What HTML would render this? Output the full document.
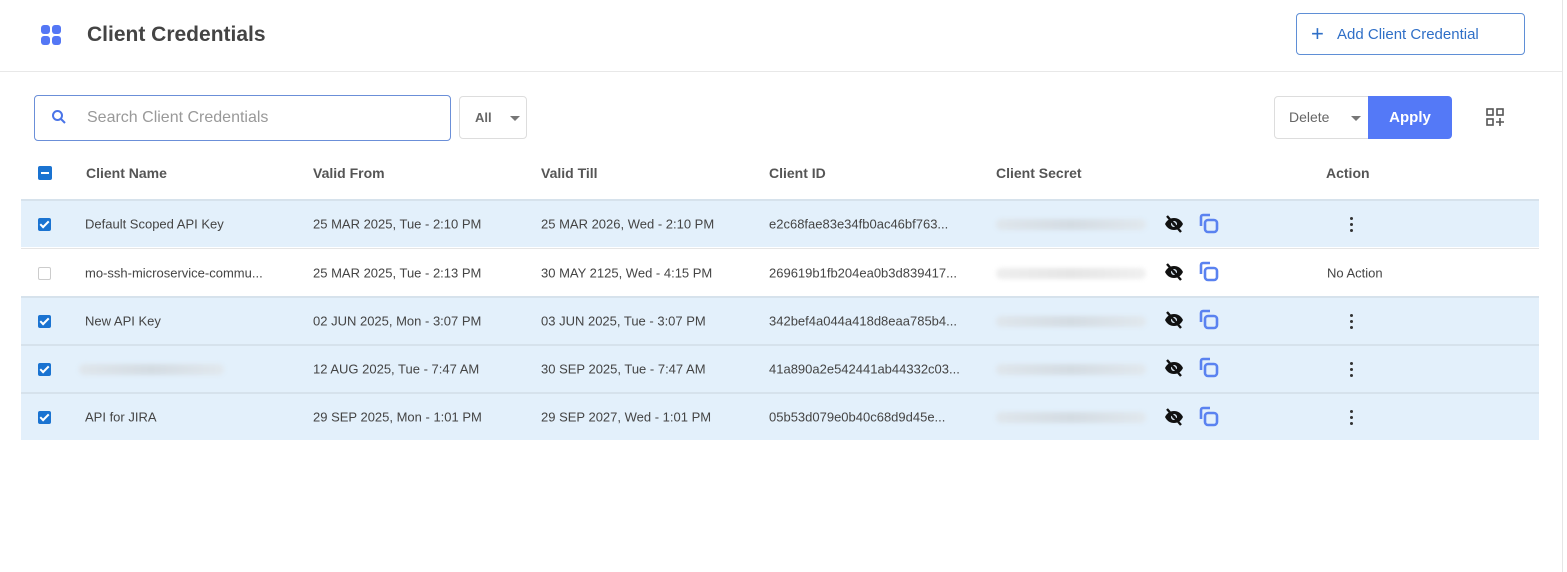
<!DOCTYPE html>
<html><head><meta charset="utf-8"><style>
*{box-sizing:border-box;margin:0;padding:0}
body{width:1567px;height:572px;background:#fff;font-family:"Liberation Sans",sans-serif;position:relative;overflow:hidden;color:#333}
.abs{position:absolute}
.hdrline{position:absolute;left:0;top:71px;width:1562px;height:1px;background:#e8e8e8}
.vline{position:absolute;left:1562px;top:0;width:1px;height:572px;background:#e6e6e6}
.row{position:absolute;left:21px;width:1518px;height:48px;font-size:13px;color:#444}
.row.sel{background:#e3f0fb;border-top:2px solid #d6e2ec}
.row.un{background:#fff;border-top:1px solid #e5e5e5}
.row span{position:absolute;top:50%;transform:translateY(-50%);white-space:nowrap}
.cb{position:absolute;left:17px;top:50%;margin-top:-6px;width:13px;height:13px;border-radius:2px;background:#1a73d1}
.cb.off{background:#fff;border:1px solid #ccc}
.blur{position:absolute;left:975px;top:50%;margin-top:-5px;width:150px;height:11px;border-radius:6px;background:linear-gradient(90deg,#dfe6ec,#d4dce3,#e1e8ee);filter:blur(2px)}
.th{position:absolute;top:165px;font-size:14px;font-weight:bold;color:#555}
.dots{position:absolute;left:1329px;top:50%;margin-top:-7px;width:3px;height:15px}
.dots i{display:block;width:3px;height:3px;border-radius:50%;background:#333;margin-bottom:3px}
</style></head><body>
<div class="vline"></div>
<svg class="abs" style="left:41px;top:25px" width="21" height="20"><rect x="0" y="0" width="9" height="9" rx="3" fill="#5477f5"/><rect x="11" y="0" width="9" height="9" rx="3" fill="#5477f5"/><rect x="0" y="11" width="9" height="9" rx="3" fill="#5477f5"/><rect x="11" y="11" width="9" height="9" rx="3" fill="#5477f5"/></svg>
<div class="abs" style="left:87px;top:23px;font-size:21px;font-weight:bold;color:#444">Client Credentials</div>
<div class="abs" style="left:1296px;top:13px;width:229px;height:42px;border:1px solid #5f8fd6;border-radius:4px;color:#2f6fc7;font-size:15px;line-height:42px;padding-left:40px">Add Client Credential</div>
<div class="abs" style="left:1311px;top:24px;font-size:22px;color:#2f6fc7;line-height:20px">+</div>
<div class="hdrline"></div>
<div class="abs" style="left:34px;top:95px;width:417px;height:46px;border:1px solid #6b8fd8;border-radius:4px"></div>
<svg class="abs" style="left:51px;top:109px" width="16" height="16"><circle cx="6.5" cy="6.5" r="4.5" stroke="#4a74e8" stroke-width="2" fill="none"/><line x1="10" y1="10" x2="14" y2="14" stroke="#4a74e8" stroke-width="2"/></svg>
<div class="abs" style="left:87px;top:109px;font-size:16px;color:#999">Search Client Credentials</div>
<div class="abs" style="left:459px;top:96px;width:68px;height:43px;border:1px solid #ddd;border-radius:4px;font-size:13px;font-weight:bold;color:#666;line-height:41px;padding-left:15px">All</div>
<div class="abs" style="left:510px;top:116px;border-left:5px solid transparent;border-right:5px solid transparent;border-top:5px solid #777"></div>
<div class="abs" style="left:1274px;top:96px;width:96px;height:43px;border:1px solid #ddd;border-radius:4px 0 0 4px;font-size:14px;color:#666;line-height:41px;padding-left:14px">Delete</div>
<div class="abs" style="left:1351px;top:116px;border-left:5px solid transparent;border-right:5px solid transparent;border-top:5px solid #777"></div>
<div class="abs" style="left:1368px;top:96px;width:84px;height:43px;background:#5479f7;border-radius:0 4px 4px 0;color:#fff;font-size:15px;font-weight:bold;line-height:43px;text-align:center">Apply</div>
<svg class="abs" style="left:1486px;top:108px" width="20" height="20" fill="none" stroke="#555" stroke-width="1.6"><rect x="1" y="1" width="6" height="6"/><rect x="11" y="1" width="6" height="6"/><rect x="1" y="11" width="6" height="6"/><path d="M14 10v8M10 14h8"/></svg>
<div class="abs" style="left:38px;top:166px;width:14px;height:14px;border-radius:2px;background:#1a73d1"><div style="position:absolute;left:3px;top:6px;width:8px;height:2px;background:#fff"></div></div>
<div class="th" style="left:86px">Client Name</div>
<div class="th" style="left:313px">Valid From</div>
<div class="th" style="left:541px">Valid Till</div>
<div class="th" style="left:769px">Client ID</div>
<div class="th" style="left:996px">Client Secret</div>
<div class="th" style="left:1326px">Action</div>

<div class="row sel" style="top:199px"><div class="cb"></div><span style="left:64px">Default Scoped API Key</span><span style="left:292px">25 MAR 2025, Tue - 2:10 PM</span><span style="left:520px">25 MAR 2026, Wed - 2:10 PM</span><span style="left:748px">e2c68fae83e34fb0ac46bf763...</span><div class="blur"></div><div class="dots"><i></i><i></i><i></i></div></div>
<div class="row un" style="top:248px"><div class="cb off"></div><span style="left:64px">mo-ssh-microservice-commu...</span><span style="left:292px">25 MAR 2025, Tue - 2:13 PM</span><span style="left:520px">30 MAY 2125, Wed - 4:15 PM</span><span style="left:748px">269619b1fb204ea0b3d839417...</span><div class="blur" style="background:linear-gradient(90deg,#eee,#e6e6e6,#f0f0f0)"></div><span style="left:1306px">No Action</span></div>
<div class="row sel" style="top:296px"><div class="cb"></div><span style="left:64px">New API Key</span><span style="left:292px">02 JUN 2025, Mon - 3:07 PM</span><span style="left:520px">03 JUN 2025, Tue - 3:07 PM</span><span style="left:748px">342bef4a044a418d8eaa785b4...</span><div class="blur"></div><div class="dots"><i></i><i></i><i></i></div></div>
<div class="row sel" style="top:344px"><div class="cb"></div><div class="blur" style="left:58px;width:145px"></div><span style="left:292px">12 AUG 2025, Tue - 7:47 AM</span><span style="left:520px">30 SEP 2025, Tue - 7:47 AM</span><span style="left:748px">41a890a2e542441ab44332c03...</span><div class="blur"></div><div class="dots"><i></i><i></i><i></i></div></div>
<div class="row sel" style="top:392px"><div class="cb"></div><span style="left:64px">API for JIRA</span><span style="left:292px">29 SEP 2025, Mon - 1:01 PM</span><span style="left:520px">29 SEP 2027, Wed - 1:01 PM</span><span style="left:748px">05b53d079e0b40c68d9d45e...</span><div class="blur"></div><div class="dots"><i></i><i></i><i></i></div></div>

<svg width="0" height="0" style="position:absolute"><defs>
<g id="eye"><path d="M1 9C3 5 6 3 10 3s7 2 9 6c-2 4-5 6-9 6S3 13 1 9z" fill="#111"/><circle cx="10" cy="9" r="3" fill="#e3f0fb"/><circle cx="10" cy="9" r="1.6" fill="#111"/><path d="M3 1l14 16" stroke="#111" stroke-width="2.4"/></g>
<g id="cp" fill="none" stroke="#5a82f0" stroke-width="2.6"><rect x="7" y="7" width="12" height="12" rx="3"/><path d="M3 13V4a2 2 0 0 1 2-2h7"/></g>
</defs></svg>
<svg class="abs" style="left:1164px;top:215px" width="22" height="18"><use href="#eye"/></svg>
<svg class="abs" style="left:1198px;top:213px" width="22" height="22"><use href="#cp"/></svg>
<svg class="abs" style="left:1164px;top:263px" width="22" height="18"><use href="#eye"/></svg>
<svg class="abs" style="left:1198px;top:261px" width="22" height="22"><use href="#cp"/></svg>
<svg class="abs" style="left:1164px;top:311px" width="22" height="18"><use href="#eye"/></svg>
<svg class="abs" style="left:1198px;top:309px" width="22" height="22"><use href="#cp"/></svg>
<svg class="abs" style="left:1164px;top:359px" width="22" height="18"><use href="#eye"/></svg>
<svg class="abs" style="left:1198px;top:357px" width="22" height="22"><use href="#cp"/></svg>
<svg class="abs" style="left:1164px;top:408px" width="22" height="18"><use href="#eye"/></svg>
<svg class="abs" style="left:1198px;top:406px" width="22" height="22"><use href="#cp"/></svg>
<style>.cb:not(.off)::after{content:"";position:absolute;left:4px;top:1px;width:3px;height:7px;border:solid #fff;border-width:0 2px 2px 0;transform:rotate(45deg)}</style>
</body></html>
